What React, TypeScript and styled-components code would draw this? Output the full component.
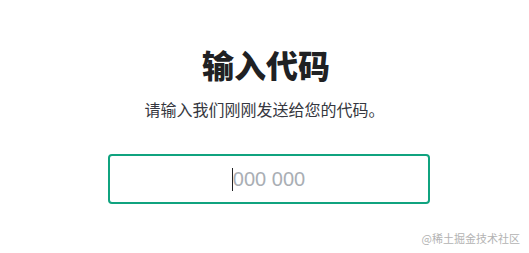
import React from 'react';
import styled, { createGlobalStyle } from 'styled-components';

const GlobalStyle = createGlobalStyle`
  html, body {
    margin: 0;
    padding: 0;
    background: #fff;
  }
  body {
    font-family: "Liberation Sans", "Noto Sans CJK SC", sans-serif;
    color: #2d333a;
  }
`;

const Page = styled.div`
  position: relative;
  width: 529px;
  height: 253px;
  overflow: hidden;
  display: flex;
  flex-direction: column;
  align-items: center;
  padding-top: 44px;
  box-sizing: border-box;
`;

const Title = styled.h1`
  margin: 0;
  font-size: 32px;
  line-height: 40px;
  font-weight: 900;
  color: #202123;
  font-family: "Noto Sans CJK SC", sans-serif;
  padding-left: 3px;
`;

const Subtitle = styled.p`
  margin: 13px 0 0;
  font-size: 16px;
  line-height: 24px;
  color: #353740;
  font-family: "Noto Sans CJK SC", sans-serif;
`;

const Field = styled.div`
  position: relative;
  margin: 33px 0 0 9px;
  width: 322px;
  height: 50px;
`;

const CodeInput = styled.input`
  display: block;
  width: 100%;
  height: 100%;
  box-sizing: border-box;
  border: 2px solid #10a37f;
  border-radius: 4px;
  outline: none;
  text-align: center;
  font-family: "Liberation Sans", sans-serif;
  font-size: 20px;
  color: #2d333a;
  caret-color: transparent;
  background: #fff;

  &::placeholder {
    color: #a9aeb4;
  }
`;

const Caret = styled.span`
  position: absolute;
  left: calc(50% - 37px);
  top: 14px;
  width: 1px;
  height: 23px;
  background: #202123;
  pointer-events: none;
`;

const Watermark = styled.span`
  position: absolute;
  right: 9px;
  bottom: 8px;
  font-size: 11px;
  line-height: 14px;
  color: #b3b3b3;
  font-family: "Noto Sans CJK SC", sans-serif;
`;

export default function App() {
  return (
    <>
      <GlobalStyle />
      <Page>
        <Title>输入代码</Title>
        <Subtitle>请输入我们刚刚发送给您的代码。</Subtitle>
        <Field>
          <CodeInput placeholder="000 000" />
          <Caret />
        </Field>
        <Watermark>@稀土掘金技术社区</Watermark>
      </Page>
    </>
  );
}
